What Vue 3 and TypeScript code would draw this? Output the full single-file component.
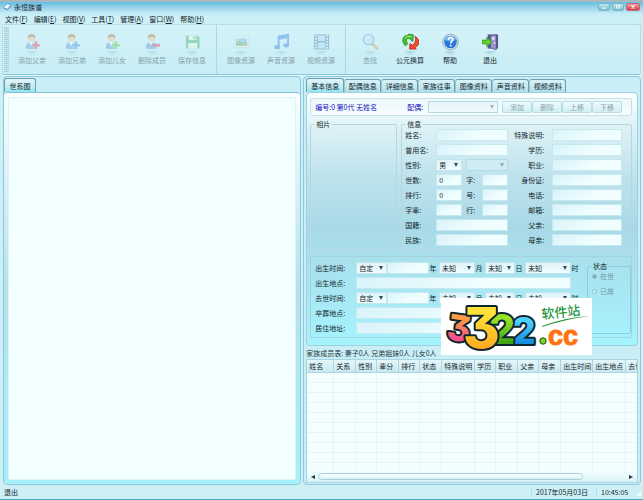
<script setup lang="ts">
import { ref } from 'vue'

interface Tool { label: string; icon: string; sign?: string; disabled: boolean }

const menus: [string, string][] = [['文件', 'F'], ['编辑', 'E'], ['视图', 'V'], ['工具', 'T'], ['管理', 'A'], ['窗口', 'W'], ['帮助', 'H']]

const toolGroups: Tool[][] = [
  [
    { label: '添加父亲', icon: 'person', sign: '#e2304a', disabled: true },
    { label: '添加兄弟', icon: 'person', sign: '#2f86e0', disabled: true },
    { label: '添加儿女', icon: 'person', sign: '#5cc431', disabled: true },
    { label: '删除成员', icon: 'minus', sign: '#e2304a', disabled: true },
    { label: '保存信息', icon: 'save', disabled: true },
  ],
  [
    { label: '图像资源', icon: 'image', disabled: true },
    { label: '声音资源', icon: 'music', disabled: true },
    { label: '视频资源', icon: 'film', disabled: true },
  ],
  [
    { label: '查找', icon: 'search', disabled: true },
    { label: '公元换算', icon: 'convert', disabled: false },
    { label: '帮助', icon: 'help', disabled: false },
    { label: '退出', icon: 'exit', disabled: false },
  ],
]

const tabs = ['基本信息', '配偶信息', '详细信息', '家族往事', '图像资料', '声音资料', '视频资料']
const activeTab = ref('基本信息')

const wideFields = ['姓名', '曾用名']
const pairFields = [
  { a: '世数', value: '0', b: '字' },
  { a: '排行', value: '0', b: '号' },
  { a: '字辈', value: '', b: '行' },
]
const originFields = ['国籍', '民族']
const rightFields = ['特殊说明', '学历', '职业', '身份证', '电话', '邮箱', '父亲', '母亲']
const spouseActions = ['添加', '删除', '上移', '下移']

const lifeRows = [
  { label: '出生时间', date: true },
  { label: '出生地点', date: false },
  { label: '去世时间', date: true },
  { label: '卒葬地点', date: false },
  { label: '居住地址', date: false },
]

const columns = [
  { name: '姓名', w: 27 }, { name: '关系', w: 22 }, { name: '性别', w: 21 }, { name: '辈分', w: 22 },
  { name: '排行', w: 21 }, { name: '状态', w: 22 }, { name: '特殊说明', w: 33 }, { name: '学历', w: 21 },
  { name: '职业', w: 22 }, { name: '父亲', w: 21 }, { name: '母亲', w: 22 }, { name: '出生时间', w: 32 },
  { name: '出生地点', w: 33 }, { name: '去世时间', w: 33 },
]
</script>

<template>
  <div class="window">
    <header class="titlebar">
      <svg class="app-icon" viewBox="0 0 10 9"><path d="M0 5 5 1l4 1-4 5z" fill="#eefaff" stroke="#4b9cc4" stroke-width=".7" /><path d="m1 6 4 1.500 4-4" fill="none" stroke="#3c86b4" stroke-width=".8" /></svg>
      <h1>永恒族谱</h1>
      <div class="win-buttons">
        <button type="button" aria-label="最小化"><svg viewBox="0 0 12 8"><path d="M4 5.500h4" stroke="#fff" stroke-width="1.500" /></svg></button>
        <button type="button" aria-label="最大化"><svg viewBox="0 0 12 8"><path d="M4 2.500h4v3H4z" fill="none" stroke="#fff" /></svg></button>
        <button type="button" class="close" aria-label="关闭"><svg viewBox="0 0 12 8"><path d="m4 2 4 4m0-4L4 6" stroke="#fff" stroke-width="1.500" /></svg></button>
      </div>
    </header>

    <nav class="menubar">
      <a v-for="[name, key] in menus" :key="key" href="#">{{ name }}(<u>{{ key }}</u>)</a>
    </nav>

    <div class="toolbar">
      <span class="grip"></span>
      <div v-for="(group, gi) in toolGroups" :key="gi" class="tool-group">
        <button v-for="tool in group" :key="tool.label" type="button" class="tool" :disabled="tool.disabled">
          <svg viewBox="0 0 18 18">
            <g v-if="tool.icon === 'person' || tool.icon === 'minus'">
              <path d="M2 15.500c0-5 2-6.500 5.500-6.500s5.500 1.500 5.500 6.500q-5.500 2-11 0z" fill="#5c93e0" />
              <path d="m5 9 2.500 4L10 9z" fill="#fff" />
              <circle cx="8" cy="5" r="3.600" fill="#f6c38b" />
              <path d="M4 5C3.500 1.500 6 .5 8 .5c3 0 4.500 2 3.800 4.500C10 4.500 9 3.500 8.500 3 7.500 4 5.500 4 4 5z" fill="#a86c3d" />
              <path v-if="tool.icon === 'person'" d="M11 8h3v3h3v3h-3v3h-3v-3H8v-3h3z" :fill="tool.sign" stroke="#fff" stroke-width=".5" />
              <path v-else d="M8 11h9v3H8z" :fill="tool.sign" />
            </g>
            <g v-else-if="tool.icon === 'save'">
              <path d="M2 2h12l2.500 2v12H2z" fill="#3fb565" /><path d="M5 2h8v5H5zM4.500 10h9.500v6H4.500z" fill="#eefcf2" /><path d="M10 3h2v3h-2z" fill="#3fb565" />
            </g>
            <g v-else-if="tool.icon === 'image'">
              <path d="M1 3h16v12H1z" fill="#f5faf9" stroke="#9db9bd" stroke-width=".6" /><path d="M3 5h12v8H3z" fill="#70c3ed" /><path d="M3 10q4-4 7 0 2-2 5 0v3H3z" fill="#4da958" /><circle cx="5.500" cy="7" r="1.200" fill="#f4d13b" /><path d="m9 13 3-3 3 3z" fill="#e68b4c" />
            </g>
            <g v-else-if="tool.icon === 'music'">
              <path d="M5 2.500 17 0v12.500h-2V5l-8 1.500v8H5z" fill="#327fdb" /><ellipse cx="4.500" cy="14.500" rx="3" ry="2.300" fill="#327fdb" /><ellipse cx="14" cy="12.500" rx="3" ry="2.300" fill="#327fdb" />
            </g>
            <g v-else-if="tool.icon === 'film'">
              <path d="M1 1h16v16H1z" fill="#4d77a8" /><path d="M5 2h8v6H5zM5 9.500h8v6.500H5z" fill="#a9d9f6" /><path d="M3 1.500v16M15 1.500v16" stroke="#f0fbff" stroke-width="1.800" stroke-dasharray="1.800 1.400" />
            </g>
            <g v-else-if="tool.icon === 'search'">
              <path d="m11 11 5 5" stroke="#dc9b4f" stroke-width="3" stroke-linecap="round" /><circle cx="7" cy="6.500" r="5.500" fill="#b7e3fa" stroke="#669fc9" stroke-width="1.400" /><path d="M4 6q1-3 4-2.500" stroke="#fff" fill="none" />
            </g>
            <g v-else-if="tool.icon === 'convert'">
              <path d="M3.500 13C-2 7 2 1.500 6.500 2L7 .5l5 1-.500 7-3-2.500-1-1C4 5.500 4 8 6 11z" fill="#44c52b" stroke="#16820f" stroke-width=".8" />
              <path d="M14 3c6 4 4 10 0 12l1 1.500H8l.5-6 2.500 2c3-1.500 4-5 3-9.500z" fill="#f44b2b" stroke="#b91c11" stroke-width=".8" />
              <path d="M3 5q2-3 7-1.500" fill="none" stroke="#b5f599" />
            </g>
            <g v-else-if="tool.icon === 'help'">
              <circle cx="9" cy="9" r="8.300" fill="#dce9ef" stroke="#7e95a5" stroke-width=".8" /><circle cx="9" cy="9" r="6.700" fill="#2877d9" /><path d="M3 7a6.200 6.200 0 0 1 12 0Q9 10 3 7z" fill="#67b2f5" />
              <path d="M6.800 7c0-3.500 4.800-3.300 4.600-.3-.1 1.700-2.200 1.700-2.200 4M9.200 12v1.700" stroke="#fff" stroke-width="1.700" fill="none" />
            </g>
            <g v-else>
              <path d="M6 1h11v15H6z" fill="#555a86" /><path d="m9 2.500 6-1.500v16.500L9 15z" fill="#9e93cf" stroke="#4e4a82" stroke-width=".6" /><path d="m10.500 4 3-.7v3.200l-3 .2z" fill="#d9d8f6" /><circle cx="13.500" cy="10" r=".8" fill="#fff" />
              <path d="M0 7h5V4l5.500 5L5 14v-3H0z" fill="#5ed22e" stroke="#28870e" stroke-width=".7" />
            </g>
          </svg>
          <i class="shadow"></i>
          <span>{{ tool.label }}</span>
        </button>
      </div>
    </div>

    <main class="work">
      <section class="pane left">
        <div class="tabs"><button type="button" class="tab active">世系图</button></div>
        <div class="tree-frame"><div class="tree"></div></div>
      </section>

      <section class="pane right">
        <div class="tabs">
          <button v-for="t in tabs" :key="t" type="button" class="tab" :class="{ active: t === activeTab }" @click="activeTab = t">{{ t }}</button>
        </div>
        <form class="sheet" @submit.prevent>
          <div class="person-bar">
            <strong>编号:0 第0代 无姓名</strong>
            <label for="spouse">配偶:</label>
            <span class="pick faded grow"><select id="spouse" disabled></select></span>
            <div class="spouse-actions"><button v-for="a in spouseActions" :key="a" type="button" disabled>{{ a }}</button></div>
          </div>

          <div class="upper">
            <fieldset class="photo"><legend>相片</legend></fieldset>
            <fieldset class="info">
              <legend>信息</legend>
              <div class="info-cols">
                <div class="rows">
                  <div v-for="f in wideFields" :key="f" class="row"><label :for="f">{{ f }}:</label><input :id="f" type="text" /></div>
                  <div class="row">
                    <label for="gender">性别:</label>
                    <span class="pick small"><select id="gender"><option>男</option></select></span>
                    <span class="pick faded grow"><select aria-label="性别说明" disabled></select></span>
                  </div>
                  <div v-for="p in pairFields" :key="p.a" class="row">
                    <label :for="p.a">{{ p.a }}:</label><input :id="p.a" type="text" :value="p.value" />
                    <label class="mid" :for="p.b">{{ p.b }}:</label><input :id="p.b" type="text" />
                  </div>
                  <div v-for="f in originFields" :key="f" class="row"><label :for="f">{{ f }}:</label><input :id="f" type="text" /></div>
                </div>
                <div class="rows second">
                  <div v-for="f in rightFields" :key="f" class="row"><label :for="f">{{ f }}:</label><input :id="f" type="text" /></div>
                </div>
              </div>
            </fieldset>
          </div>

          <div class="lower">
            <div class="rows life">
              <div v-for="r in lifeRows" :key="r.label" class="row">
                <label :for="r.label">{{ r.label }}:</label>
                <div v-if="r.date" class="date">
                  <span class="pick era"><select :id="r.label"><option>自定</option></select></span>
                  <input type="text" :aria-label="r.label + '年'" />
                  <span class="unit">年</span>
                  <span class="pick month"><select aria-label="月"><option>未知</option></select></span>
                  <span class="unit">月</span>
                  <span class="pick day"><select aria-label="日"><option>未知</option></select></span>
                  <span class="unit">日</span>
                  <span class="pick hour"><select aria-label="时"><option>未知</option></select></span>
                  <span class="unit">时</span>
                </div>
                <div v-else class="place"><input :id="r.label" type="text" /></div>
              </div>
            </div>
            <fieldset class="state">
              <legend>状态</legend>
              <label><input type="radio" name="state" checked disabled />在世</label>
              <label><input type="radio" name="state" disabled />已故</label>
            </fieldset>
          </div>
        </form>

        <p class="summary">家族成员表: 妻子0人 兄弟姐妹0人 儿女0人</p>
        <div class="members">
          <div class="table-clip">
            <table>
              <colgroup><col v-for="c in columns" :key="c.name" :style="{ width: c.w + 'px' }" /></colgroup>
              <thead><tr><th v-for="c in columns" :key="c.name">{{ c.name }}</th></tr></thead>
              <tbody><tr v-for="n in 10" :key="n"><td v-for="c in columns" :key="c.name"></td></tr></tbody>
            </table>
          </div>
          <div class="scroll"><i class="arrow prev"></i><div class="track"><div class="thumb"></div></div><i class="arrow next"></i></div>
        </div>

        <svg class="logo" viewBox="0 0 151 57" role="img" aria-label="3322.cc 软件站">
          <defs>
            <linearGradient id="pink" x1="0" y1="0" x2="0" y2="1"><stop offset=".3" stop-color="#ff9b43" /><stop offset=".85" stop-color="#f0409c" /></linearGradient>
            <linearGradient id="gold" x1="0" y1="0" x2="0" y2="1"><stop offset=".3" stop-color="#ffe138" /><stop offset=".9" stop-color="#ff9f1c" /></linearGradient>
            <linearGradient id="leaf" x1="0" y1="0" x2="0" y2="1"><stop offset=".3" stop-color="#96e12b" /><stop offset=".9" stop-color="#28940c" /></linearGradient>
            <linearGradient id="sky" x1="0" y1="0" x2="0" y2="1"><stop offset=".3" stop-color="#4cd1ff" /><stop offset=".9" stop-color="#0879d2" /></linearGradient>
          </defs>
          <rect width="151" height="57" fill="#fff" />
          <g class="digits">
            <text x="71" y="46" font-size="37" fill="url(#sky)">2</text>
            <text x="48" y="46" font-size="41" fill="url(#leaf)">2</text>
            <text x="6" y="43" font-size="36" fill="url(#pink)" transform="rotate(8 18 32)">3</text>
            <text x="22" y="50" font-size="56" fill="url(#gold)">3</text>
          </g>
          <circle cx="102" cy="43" r="3.200" fill="#79d52b" stroke="#26490f" />
          <text class="cc" x="107" y="47">cc</text>
          <text class="site" x="101" y="21" transform="rotate(-6 101 21)">软件站</text>
          <path d="M101 28q24-9 49-10-26 3-49 11z" fill="#249439" />
        </svg>
      </section>
    </main>

    <footer class="status"><span class="message">退出</span><time class="date-cell">2017年05月03日</time><time class="time-cell">10:45:05</time></footer>
  </div>
</template>

<style>
body { margin: 0; background: #cdf0f6; }
</style>

<style scoped>
* { box-sizing: border-box; }
.window {
  min-height: 100vh; display: flex; flex-direction: column; padding: 0 2px; overflow: hidden;
  border-top: 2px solid #a8b8be; border-bottom: 1px solid #4fa3c6;
  background: linear-gradient(#62bfe3, #9ed4ea 6px, #c7eef6 12px, #cdf0f6 16px);
  color: #14242b; font: 7px/8px "Noto Sans CJK SC", sans-serif;
}
button, input, select { font: inherit; color: inherit; margin: 0; padding: 0; border: 0; min-width: 0; }
.titlebar { display: flex; align-items: center; height: 10px; gap: 2px; padding: 0 1px; }
.titlebar h1 { margin: 0; font: inherit; flex: 1; }
.app-icon { width: 9px; height: 8px; }
.win-buttons { display: flex; gap: 2px; }
.win-buttons button { width: 12px; height: 8px; border-radius: 2px; border: 1px solid #78b5c8; background: linear-gradient(#c1e7ef, #78bdcc); }
.win-buttons .close { width: 14px; background: linear-gradient(#f1a0a0, #d63e4b); border-color: #b96a76; }
.win-buttons svg { display: block; width: 100%; height: 100%; }
.menubar { display: flex; gap: 6px; padding: 3px 3px 0; height: 12px; }
.menubar a { color: inherit; text-decoration: none; }
.menubar u { text-underline-offset: 1px; }

.toolbar { display: flex; height: 51px; padding: 0 1px; border: 1px solid #b4dfe9; border-bottom-color: #86c6da; border-radius: 2px; background: linear-gradient(#d3f3f8, #c8edf5); box-shadow: 0 1px #e4f9fc; }
.grip { width: 5px; margin: 2px 3px 2px 0; background: repeating-linear-gradient(#a9d0da 0 1px, #c5e8ef 1px 2px); }
.tool-group { display: flex; padding: 0 4px 0 0; }
.tool-group + .tool-group { border-left: 1px solid #a9d8e5; padding: 0 4px; }
.tool { width: 40px; background: none; display: flex; flex-direction: column; align-items: center; padding-top: 8px; white-space: nowrap; }
.tool svg { width: 17px; height: 18px; flex: none; }
.shadow { width: 14px; height: 5px; background: radial-gradient(ellipse at top, #87b8ca, transparent 70%); opacity: .6; }
.tool:disabled { color: #86a2aa; }
.tool:disabled svg, .tool:disabled .shadow { opacity: .4; }

.work { flex: 1; display: flex; gap: 2px; padding: 1px 0 0 1px; min-height: 0; }
.pane { position: relative; min-width: 0; display: flex; flex-direction: column; border: 1px solid #8fc8da; border-radius: 4px; background: #c9eef5; }
.left { flex: 300; }
.right { flex: 336; padding: 0 2px 1px; }
.tabs { display: flex; align-items: flex-end; height: 15px; padding-top: 1px; }
.tab { height: 13px; width: 37px; border: 1px solid #6f9fae; border-bottom: 0; border-radius: 3px 3px 0 0; background: linear-gradient(#d8f3f8, #b1dfea); }
.tab + .tab { border-left-color: #9fc4cf; }
.tab.active { height: 14px; width: 38px; background: linear-gradient(#e2f7fb, #c2eaf2 60%, #8fe6f5); }
.left .tab.active { width: 32px; }
.tree-frame { flex: 1; display: flex; padding: 4px; border-top: 1px solid #82c2d6; border-radius: 4px; background: linear-gradient(#fafeff, #b6e1ec 50%, #a5f0fc); }
.tree { flex: 1; background: #f2ffff; border: 1px solid #dcf2f6; }

.sheet { border: 1px solid #9ad0e0; border-radius: 4px; padding: 5px 5px 7px 3px; background: linear-gradient(#fcffff, #ddf1f6 14%, #bde2ec 34%, #a8d9e7 54%, #a9deea 62%, #a6effa 92%, #a5f4fe); }
.person-bar { display: flex; align-items: center; height: 18px; padding: 0 9px 0 4px; border: 1px solid #c6e1e8; border-radius: 2px; background: linear-gradient(#edf7fa, #f8fdfe); color: #1212c4; }
.person-bar strong { font-weight: 400; width: 92px; white-space: nowrap; }
.person-bar label { width: 21px; }
.spouse-actions { display: flex; margin-left: 4px; }
.spouse-actions button { width: 30px; height: 12px; border: 1px solid #b6dfe8; border-radius: 2px; background: linear-gradient(#eefbfd, #d2eef4); color: #8aa4ab; }
.pick { position: relative; display: block; height: 12px; }
.pick select { display: block; appearance: none; width: 100%; height: 12px; line-height: 10px; padding-left: 2px; border: 1px solid #c2e5ed; border-radius: 0; background: linear-gradient(#def3f9, #effdff); color: #14242b; opacity: 1; }
.pick::after { content: ""; position: absolute; right: 4px; top: 4px; border: 2px solid transparent; border-top: 4px solid #334a52; border-bottom: 0; pointer-events: none; }
.pick.faded select { background: rgb(225 246 251 / 40%); border-color: #b3dbe6; }
.faded::after { opacity: .4; }
.grow { flex: 1; }

fieldset { margin: 0; padding: 0; min-width: 0; border: 1px solid #b5d7e1; border-radius: 2px; }
legend { padding: 0 2px; margin-left: 3px; }
.upper { display: flex; gap: 4px; margin-top: 4px; }
.photo { width: 87px; }
.info { flex: 1; }
.info-cols { display: flex; gap: 5px; padding: 1px 9px 4px 3px; }
.rows { display: flex; flex-direction: column; gap: 3px; flex: 1; min-width: 0; }
.row { display: flex; align-items: center; height: 12px; }
.row > label { flex: none; width: 31px; white-space: nowrap; }
.row > label.mid { width: 20px; padding-left: 4px; }
.second { flex: 1; }
.second .row > label { width: 31px; text-align: right; margin-right: 8px; }
.info .rows:not(.second) { flex: none; width: 103px; }
input[type="text"] { flex: 1; width: 10px; height: 12px; padding-left: 2px; border: 1px solid #c6e9f0; background: linear-gradient(150deg, #d8f3fa, #f0feff 60%); }
.small { width: 26px; margin-right: 4px; }

.lower { display: flex; gap: 8px; margin-top: 5px; padding: 5px 0 3px 4px; border: 1px solid #a5d2e0; border-radius: 2px; }
.life .row > label { width: 41px; }
.date, .place { flex: 1; display: flex; align-items: center; min-width: 0; }
.place { padding-right: 8px; }
.era { width: 31px; }
.unit { width: 8px; text-align: center; }
.month { width: 36px; margin-left: 2px; }
.day { width: 30px; margin-left: 2px; }
.hour { width: 46px; margin-left: 2px; }
.state { width: 44px; align-self: stretch; border-color: #8fcbdc; }
.state label { display: flex; align-items: center; gap: 3px; height: 8px; margin: 2px 0 7px 4px; color: #7199a4; }
.state input { appearance: none; width: 5px; height: 5px; border: 1px solid #95bfca; border-radius: 50%; background: #c9eff5; }
.state input:checked { background: #80a9b4; }

.summary { margin: 0; padding: 3px 0 2px; height: 13px; color: #243a42; }
.members { flex: 1; display: flex; flex-direction: column; border: 1px solid #a6d4e1; background: #f3ffff; }
.table-clip { overflow: hidden; flex: 1; }
table { table-layout: fixed; width: 351px; margin-bottom: -4px; border-collapse: separate; border-spacing: 0; }
th { height: 13px; padding: 0 0 0 2px; text-align: left; font-weight: 400; white-space: nowrap; background: linear-gradient(#e4f7fa, #c9e9f0); border-right: 1px solid #b2d4de; border-bottom: 1px solid #b2d4de; }
td { height: 10px; padding: 0; border-right: 1px solid #e7f3f4; border-bottom: 1px solid #e7f3f4; }
.scroll { display: flex; align-items: center; height: 11px; padding: 0 4px; gap: 3px; background: linear-gradient(#f3ffff, #d9f2f7); }
.track { flex: 1; }
.thumb { width: 86%; height: 7px; border: 1px solid #a5cfdb; border-radius: 4px; background: linear-gradient(#f6ffff, #dcf3f7); }
.arrow { border: 2px solid transparent; }
.prev { border-right: 4px solid #23343a; border-left: 0; }
.next { border-left: 4px solid #23343a; border-right: 0; }

.status { display: flex; align-items: center; height: 14px; padding: 0 0 0 2px; }
.message { flex: 1; }
.date-cell { width: 65px; padding-left: 4px; border-left: 1px solid #b4dfe8; }
.time-cell { width: 45px; padding-left: 4px; border-left: 1px solid #b4dfe8; background: linear-gradient(135deg, transparent 91%, #f5ffff 91%); }

.logo { position: absolute; right: 48px; bottom: 129px; width: 151px; height: 57px; }
.digits text { font-family: Inter, "DejaVu Sans", sans-serif; font-weight: 800; font-feature-settings: "cv09"; stroke: #10242b; stroke-width: 4px; stroke-linejoin: round; paint-order: stroke; }
.cc { font: 700 27px "Liberation Sans", sans-serif; fill: #ff730f; stroke: #ff730f; stroke-width: 1px; }
.site { font: 500 13px "Noto Sans CJK SC", sans-serif; fill: #249439; }
</style>
